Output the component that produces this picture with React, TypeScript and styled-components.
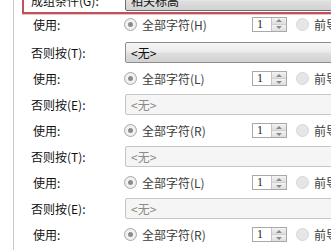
import styled, { createGlobalStyle } from "styled-components";

const GlobalStyle = createGlobalStyle`
  body {
    margin: 0;
    background: #ffffff;
    overflow: hidden;
    font-family: "Noto Sans CJK SC", "Noto Sans", sans-serif;
    font-size: 12px;
    color: #1a1a1a;
  }
`;

interface IRule {
  label: string;
  enabled: boolean;
  useKey: string;
}

const rules: IRule[] = [
  { label: "否则按(T):", enabled: true, useKey: "L" },
  { label: "否则按(E):", enabled: false, useKey: "R" },
  { label: "否则按(T):", enabled: false, useKey: "L" },
  { label: "否则按(E):", enabled: false, useKey: "R" },
];

function UseLine({ hotkey, first }: { hotkey: string; first?: boolean }) {
  return (
    <UseRow $first={first}>
      <UseLabel>使用:</UseLabel>
      <Radio $checked />
      <RadioText>全部字符({hotkey})</RadioText>
      <Spin>
        <SpinValue>1</SpinValue>
        <SpinButtons>
          <SpinButton>
            <Arrow $up />
          </SpinButton>
          <SpinButton>
            <Arrow />
          </SpinButton>
        </SpinButtons>
      </Spin>
      <Radio />
      <RadioText>前导</RadioText>
    </UseRow>
  );
}

function App() {
  return (
    <>
      <GlobalStyle />
      <Frame>
        <Highlight>
          <SelectRow $inBox>
            <RowLabel>成组条件(G):</RowLabel>
            <Combo $enabled $dark>
              相关标高
            </Combo>
          </SelectRow>
        </Highlight>
        <UseLine hotkey="H" first />
        {rules.map((r, i) => (
          <Block key={i}>
            <SelectRow>
              <RowLabel>{r.label}</RowLabel>
              <Combo $enabled={r.enabled}>&lt;无&gt;</Combo>
            </SelectRow>
            <UseLine hotkey={r.useKey} />
          </Block>
        ))}
      </Frame>
    </>
  );
}

const Frame = styled.div`
  margin-left: 13px;
  border-left: 1px solid #c9c9c9;
  height: 250px;
  width: 480px;
  display: flex;
  flex-direction: column;
`;

const Highlight = styled.div`
  margin-top: -13px;
  margin-left: 8px;
  border: 2px solid #c4505b;
  padding: 1px 0;
  box-shadow: 0 1px 0 #e8c4c8;
`;

const Block = styled.div`
  display: flex;
  flex-direction: column;
`;

const SelectRow = styled.div<{ $inBox?: boolean }>`
  display: flex;
  align-items: center;
  height: 21px;
  padding-left: ${(p) => (p.$inBox ? "7px" : "17px")};
`;

const RowLabel = styled.div`
  width: 94px;
  flex-shrink: 0;
  white-space: nowrap;
  color: #111;
`;

const Combo = styled.div<{ $enabled?: boolean; $dark?: boolean }>`
  flex: 1;
  height: 21px;
  box-sizing: border-box;
  display: flex;
  align-items: center;
  padding-left: 5px;
  border-radius: 2px;
  border: 1px solid
    ${(p) => (p.$dark ? "#6e6e6e" : p.$enabled ? "#8e8e8e" : "#c6c6c6")};
  background: ${(p) =>
    p.$enabled
      ? "linear-gradient(#f6f6f6, #ececec 45%, #dedede 55%, #d2d2d2)"
      : "#f5f5f5"};
  color: ${(p) => (p.$enabled ? "#111" : "#8a8a8a")};
`;

const UseRow = styled.div<{ $first?: boolean }>`
  display: flex;
  align-items: center;
  height: ${(p) => (p.$first ? "22px" : "31px")};
  margin-bottom: ${(p) => (p.$first ? "8px" : "0")};
  padding-left: 19px;
  white-space: nowrap;
`;

const UseLabel = styled.div`
  width: 91px;
  flex-shrink: 0;
  color: #111;
`;

const Radio = styled.span<{ $checked?: boolean }>`
  position: relative;
  width: 11px;
  height: 11px;
  flex-shrink: 0;
  border-radius: 50%;
  border: 1px solid ${(p) => (p.$checked ? "#a9a9a9" : "#d6d6d6")};
  background: ${(p) =>
    p.$checked ? "radial-gradient(#ffffff, #e4e4e4)" : "#e6e6e6"};
  margin-right: 5px;

  &::after {
    content: "";
    display: ${(p) => (p.$checked ? "block" : "none")};
    position: absolute;
    left: 3px;
    top: 3px;
    width: 5px;
    height: 5px;
    border-radius: 50%;
    background: #8c8c8c;
  }
`;

const RadioText = styled.span`
  color: #3c3c3c;
  width: 110px;
  flex-shrink: 0;

  &:last-child {
    width: auto;
  }
`;

const Spin = styled.div`
  display: flex;
  width: 35px;
  height: 15px;
  box-sizing: border-box;
  border: 1px solid #a9a9a9;
  background: #fff;
  margin-right: 9px;
  flex-shrink: 0;
`;

const SpinValue = styled.div`
  flex: 1;
  font-family: "Liberation Serif", serif;
  font-size: 12px;
  line-height: 13px;
  padding-left: 4px;
  color: #222;
`;

const SpinButtons = styled.div`
  width: 14px;
  display: flex;
  flex-direction: column;
  border-left: 1px solid #c4c4c4;
`;

const SpinButton = styled.div`
  flex: 1;
  display: flex;
  align-items: center;
  justify-content: center;
  background: linear-gradient(#f3f3f3, #dedede);
  border-bottom: 1px solid #cfcfcf;

  &:last-child {
    border-bottom: none;
  }
`;

const Arrow = styled.span<{ $up?: boolean }>`
  width: 0;
  height: 0;
  border-left: 3px solid transparent;
  border-right: 3px solid transparent;
  ${(p) =>
    p.$up ? "border-bottom: 3px solid #8a8a8a;" : "border-top: 3px solid #8a8a8a;"}
`;

export default App;
